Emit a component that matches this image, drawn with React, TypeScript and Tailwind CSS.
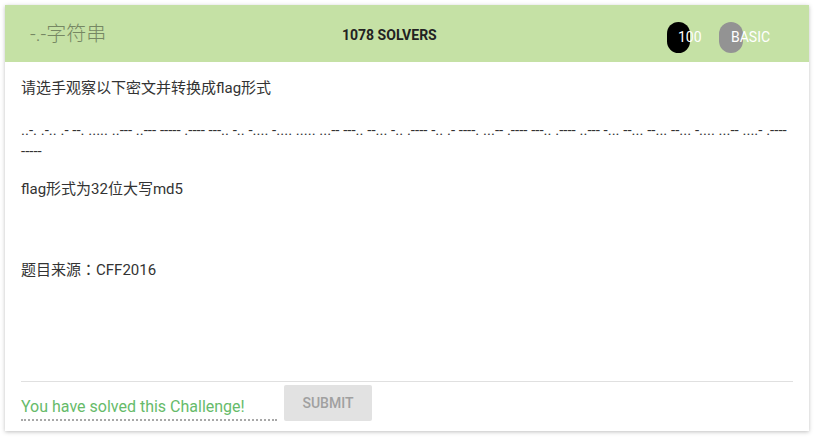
const morse =
  '..-. .-.. .- --. ..... ..--- ..--- ----- .---- ---.. -.. -.... -.... ..... ...-- ---.. --... -.. .---- -.. .- ----. ...-- .---- ---.. .---- ..--- -... --... --... --... -.... ...-- ....- .---- -----';

const App = () => {
  return (
    <div className="min-h-[439px] bg-white pl-[5px] pt-[5px] font-['Roboto','Noto_Sans_CJK_SC',sans-serif]">
      <div className="flex h-[426px] w-[804px] flex-col bg-white shadow-[0_1px_4px_rgba(0,0,0,0.25)]">
        <div className="flex h-[57px] items-center bg-[#c5e1a5] pl-[25px] pr-[66px]">
          <h2 className="w-[290px] text-[20px] font-light text-[#768763]">-.-字符串</h2>
          <span className="mt-[4px] w-[340px] pl-[22px] text-[14px] font-bold text-[#222]">1078 SOLVERS</span>
          <div className="ml-auto mt-[8px] flex items-center gap-[29px]">
            <span className="flex h-[31px] w-[23px] items-center whitespace-nowrap rounded-full bg-black pl-[11px] text-[14px] text-white">
              100
            </span>
            <span className="flex h-[31px] w-[24px] items-center whitespace-nowrap rounded-full bg-[#939393] pl-[12px] text-[14px] text-white">
              BASIC
            </span>
          </div>
        </div>

        <div className="flex-1 px-[16px] pt-[16px] text-[15px] leading-[21px] text-[#333]">
          <p>请选手观察以下密文并转换成flag形式</p>
          <p className="mt-[21px]">{morse}</p>
          <p className="mt-[17px]">flag形式为32位大写md5</p>
          <p className="mt-[58px]">
            题目来源<span className="font-['Noto_Sans_CJK_JP',sans-serif]">：</span>CFF2016
          </p>
        </div>

        <div className="mx-[16px] flex items-start gap-[7px] border-t border-[#e0e0e0] pb-[10px] pt-[3px]">
          <div className="w-[256px] border-b-2 border-dotted border-[#a8a8a8] pt-[10px] text-[16px] leading-[24px] text-[#66bb6a]">
            You have solved this Challenge!
          </div>
          <button className="h-[36px] w-[88px] rounded-[2px] bg-[#e2e2e2] text-[14px] font-medium text-[#a0a0a0]">
            SUBMIT
          </button>
        </div>
      </div>
    </div>
  );
};

export default App;
